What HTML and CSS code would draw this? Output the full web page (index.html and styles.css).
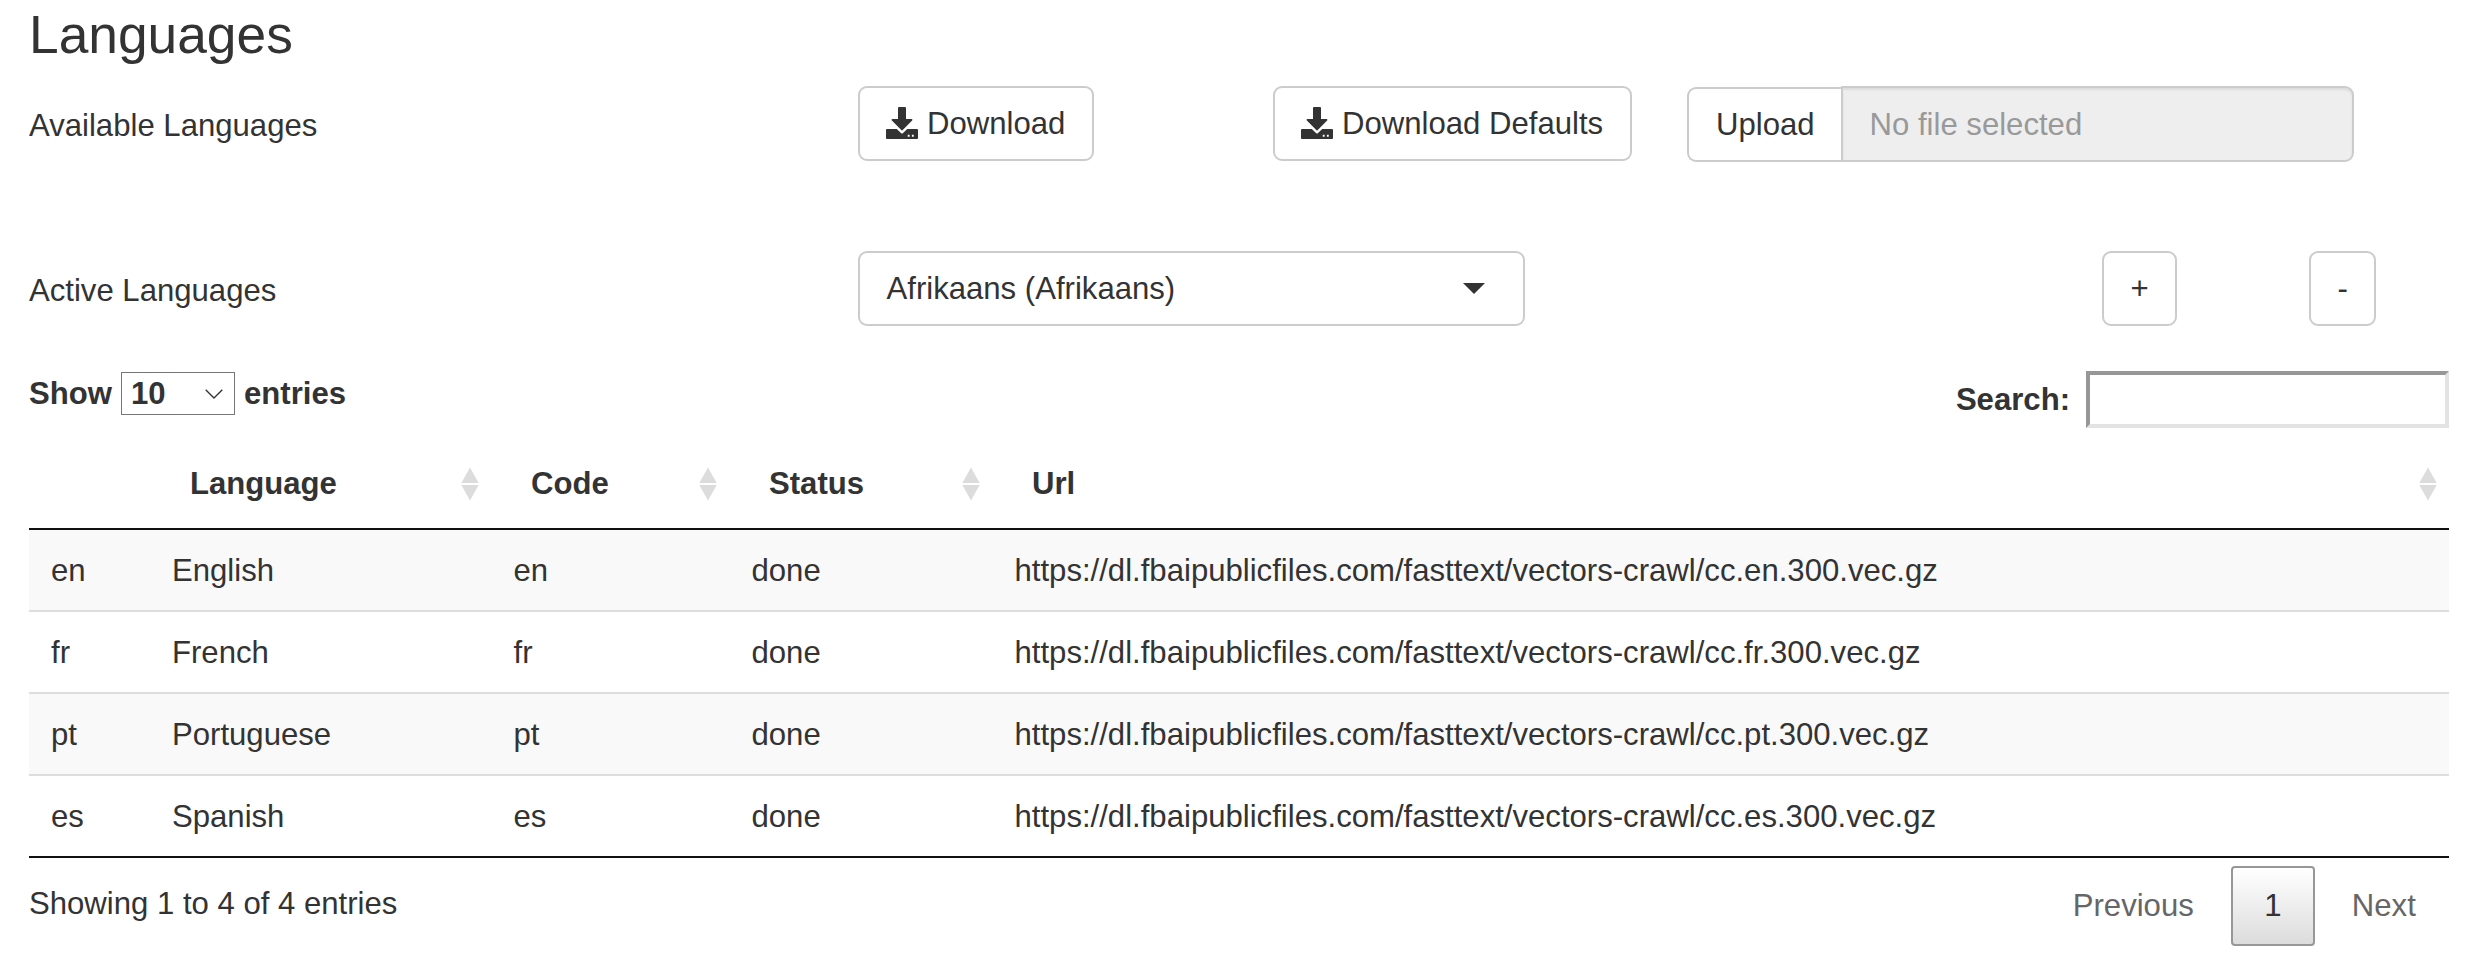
FILE: index.html
```html
<!DOCTYPE html>
<html lang="en">
<head>
<meta charset="utf-8">
<title>Languages</title>
<link rel="stylesheet" href="styles.css">
</head>
<body>
<svg class="sprite" aria-hidden="true">
  <symbol id="download" viewBox="0 0 512 512"><path fill-rule="evenodd" d="M206 0h100c8 0 14 6 14 14v178h88c15 0 20 13 10 23L264 373c-5 5-11 5-16 0L94 215c-10-10-5-23 10-23h88V14c0-8 6-14 14-14zM18 350h154l72 68c7 7 17 7 24 0l72-68h154c10 0 18 8 18 18v126c0 10-8 18-18 18H18c-10 0-18-8-18-18V368c0-10 8-18 18-18zM348 444v30h30v-30zM414 444v30h30v-30z"/></symbol>
  <symbol id="sort" viewBox="0 0 18 34"><path d="M9 0.500L17.700 16H0.300zM9 33.500L17.700 18H0.300z"/></symbol>
</svg>
<main class="page">
  <h2 class="title">Languages</h2>
  <div class="row available">
    <div class="label">Available Languages</div>
    <div><button class="btn"><svg class="dl"><use href="#download"/></svg>Download</button></div>
    <div><button class="btn"><svg class="dl"><use href="#download"/></svg>Download Defaults</button></div>
    <div class="file"><span class="file-btn">Upload</span><span class="file-name">No file selected</span></div>
  </div>
  <div class="row active">
    <div class="label">Active Languages</div>
    <div><div class="picker">Afrikaans (Afrikaans)<svg class="caret" viewBox="0 0 22 11"><path d="M0 0H22L11 11z"/></svg></div></div>
    <div><button class="btn">+</button></div>
    <div><button class="btn">-</button></div>
  </div>
  <div class="tools">
    <div class="length">Show <span class="count">10<svg class="chev" viewBox="0 0 18 10"><path d="M0.700 0.700L9 9L17.300 0.700"/></svg></span> entries</div>
    <label class="search">Search:<input class="search-box" type="text"></label>
  </div>
  <table class="table">
    <colgroup><col class="c0"><col class="c1"><col class="c2"><col class="c3"><col></colgroup>
    <thead><tr>
      <th></th>
      <th><div class="head">Language<svg class="sort"><use href="#sort"/></svg></div></th>
      <th><div class="head">Code<svg class="sort"><use href="#sort"/></svg></div></th>
      <th><div class="head">Status<svg class="sort"><use href="#sort"/></svg></div></th>
      <th><div class="head">Url<svg class="sort"><use href="#sort"/></svg></div></th>
    </tr></thead>
    <tbody>
      <tr><td>en</td><td>English</td><td>en</td><td>done</td><td>https://dl.fbaipublicfiles.com/fasttext/vectors-crawl/cc.en.300.vec.gz</td></tr>
      <tr><td>fr</td><td>French</td><td>fr</td><td>done</td><td>https://dl.fbaipublicfiles.com/fasttext/vectors-crawl/cc.fr.300.vec.gz</td></tr>
      <tr><td>pt</td><td>Portuguese</td><td>pt</td><td>done</td><td>https://dl.fbaipublicfiles.com/fasttext/vectors-crawl/cc.pt.300.vec.gz</td></tr>
      <tr><td>es</td><td>Spanish</td><td>es</td><td>done</td><td>https://dl.fbaipublicfiles.com/fasttext/vectors-crawl/cc.es.300.vec.gz</td></tr>
    </tbody>
  </table>
  <div class="foot">
    <div class="info">Showing 1 to 4 of 4 entries</div>
    <div class="pager"><span class="page-link">Previous</span><span class="page-link current">1</span><span class="page-link">Next</span></div>
  </div>
</main>
</body>
</html>
```
FILE: styles.css
```css
* { box-sizing: border-box; }
body {
  margin: 0;
  background: #fff;
  color: #333;
  font: 31.12px/44px "Liberation Sans", Arial, sans-serif;
}
.sprite { display: none; }
.page { padding: 6px 29px 0; }
.title { margin: 0; height: 80px; font-size: 53.3px; font-weight: 400; line-height: 58px; }
.row { display: grid; height: 165px; align-items: start; }
.available { grid-template-columns: 829px 415px 414px 667px; }
.active { grid-template-columns: 829px 1244px 207px 1fr; height: 120px; }
.label { padding-top: 18px; }
.btn {
  display: flex;
  align-items: center;
  height: 75px;
  padding: 0 26.5px;
  border: 2px solid #ccc;
  border-radius: 9px;
  background: #fff;
  color: #333;
  font: inherit;
}
.dl { width: 32px; height: 32px; margin: 0 9px 2px -0.500px; fill: #333; }
.file { display: flex; padding-top: 1px; }
.file-btn {
  width: 154px;
  height: 75px;
  padding: 14px 0 0 27px;
  border: 2px solid #ccc;
  border-right: 0;
  border-radius: 9px 0 0 9px;
}
.file-name {
  flex: 1;
  height: 76px;
  margin-top: -1px;
  padding: 15px 26.5px 0;
  border: 2px solid #ccc;
  border-radius: 0 9px 9px 0;
  background: #eee;
  color: #999;
  box-shadow: inset 0 2px 2px rgba(0, 0, 0, 0.075);
}
.picker {
  display: flex;
  justify-content: space-between;
  align-items: center;
  width: 667px;
  height: 75px;
  padding: 0 38px 0 26.5px;
  border: 2px solid #ccc;
  border-radius: 9px;
}
.caret { width: 22px; height: 11px; fill: #333; }
.tools { display: flex; justify-content: space-between; height: 72px; font-weight: 700; }
.length { display: flex; align-items: center; height: 43px; margin-top: 1px; }
.count {
  display: flex;
  justify-content: space-between;
  align-items: center;
  width: 114px;
  height: 43px;
  margin: 0 9px;
  padding: 0 11px 0 9px;
  border: 1px solid #767676;
}
.chev { width: 18px; height: 10px; fill: none; stroke: #333; stroke-width: 1.300; }
.search { display: flex; align-items: center; height: 57px; }
.search-box { width: 363px; height: 57px; margin-left: 16px; border: 4px solid; border-color: #979797 #e3e3e3 #e3e3e3 #979797; background: #fff; }
.table { width: 2420px; table-layout: fixed; border-collapse: separate; border-spacing: 0; border-bottom: 2px solid #111; }
.c0 { width: 121px; }
.c1 { width: 341px; }
.c2 { width: 238px; }
.c3 { width: 263px; }
.table th { height: 87px; padding: 0; border-bottom: 2px solid #111; text-align: left; }
.head { display: flex; justify-content: space-between; align-items: center; padding: 0 12px 4px 40px; }
.sort { width: 18px; height: 34px; fill: #dcdcdc; }
.table td { height: 82px; padding: 2px 22px 0; border-top: 2px solid #ddd; }
.table td:nth-child(n+3) { padding-left: 22.5px; }
.table tbody tr:first-child td { height: 80px; border-top: 0; }
.table tbody tr:nth-child(odd) { background: #f9f9f9; }
.foot { display: flex; justify-content: space-between; padding-top: 8px; }
.info { padding-top: 16px; }
.pager { display: flex; gap: 4px; }
.page-link { height: 80px; padding: 16px 31.2px 0; border: 2px solid transparent; color: #666; }
.current { border-color: #979797; border-radius: 4px; background: linear-gradient(#fff, #dcdcdc); color: #333; }
```
